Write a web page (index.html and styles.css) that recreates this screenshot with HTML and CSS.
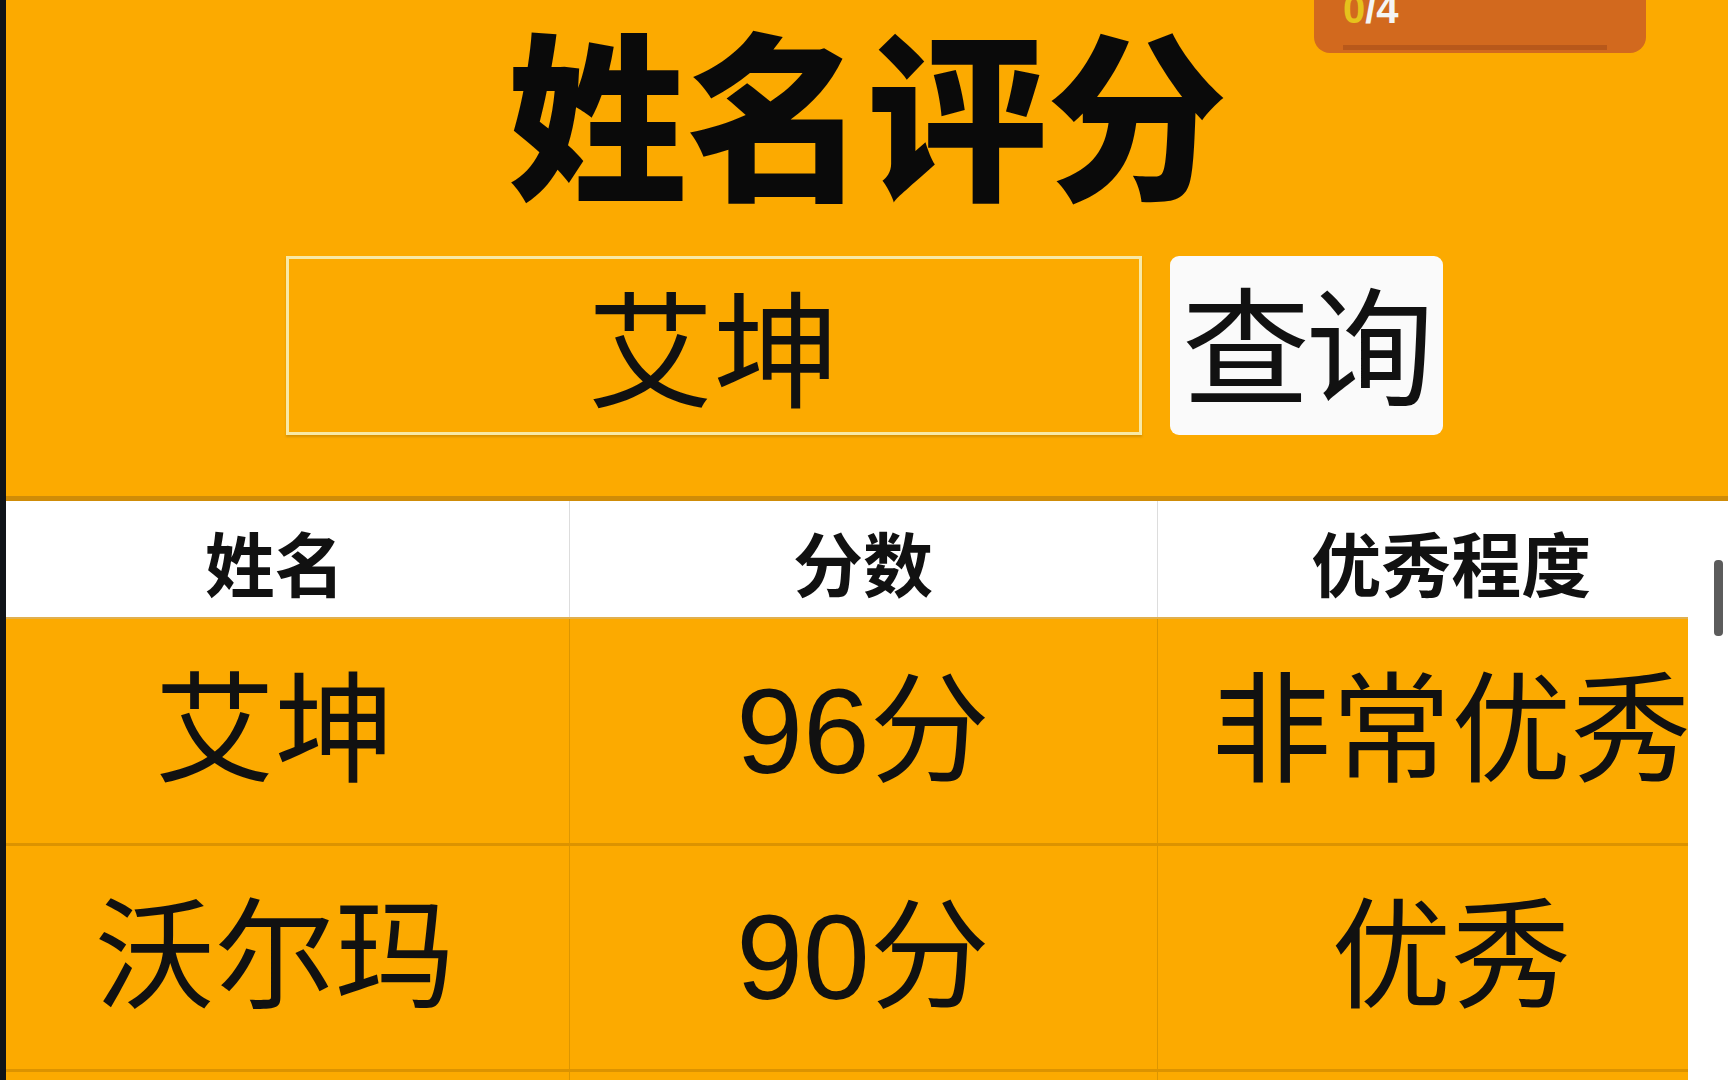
FILE: index.html
```html
<!DOCTYPE html>
<html lang="zh-CN">
<head>
<meta charset="utf-8">
<title>姓名评分</title>
<link rel="stylesheet" href="styles.css">
</head>
<body>
<div class="page">
  <header class="hero">
    <h1 class="title">姓名评分</h1>
    <div class="search">
      <div class="input">艾坤</div>
      <button class="btn">查询</button>
    </div>
  </header>
  <div class="table-wrap">
    <table class="score">
      <thead>
        <tr><th>姓名</th><th>分数</th><th>优秀程度</th></tr>
      </thead>
      <tbody>
        <tr><td>艾坤</td><td><span class="num">96</span>分</td><td>非常优秀</td></tr>
        <tr><td>沃尔玛</td><td><span class="num">90</span>分</td><td>优秀</td></tr>
        <tr><td>&nbsp;</td><td>&nbsp;</td><td>&nbsp;</td></tr>
      </tbody>
    </table>
  </div>
  <div class="scroll-thumb"></div>
  <div class="badge"><span class="done">0</span>/4<span class="badge-bar"></span></div>
</div>
</body>
</html>
```
FILE: styles.css
```css
html, body {
  margin: 0;
  padding: 0;
  height: 100%;
  overflow: hidden;
}
body {
  font-family: "Noto Sans CJK SC", "Liberation Sans", sans-serif;
  background: #ffffff;
  color: #111;
}
.page {
  position: relative;
  min-height: 100vh;
  border-left: 6px solid #101418;
  background: #ffffff;
}
.hero {
  background: #fcaa00;
  padding-top: 18px;
  padding-bottom: 61px;
  border-bottom: 5px solid #cf8c08;
}
.title {
  margin: 0;
  text-align: center;
  font-size: 180px;
  line-height: 180px;
  font-weight: 900;
  color: #0a0a0a;
}
.search {
  margin-top: 58px;
  display: flex;
  justify-content: center;
  gap: 28px;
  padding-right: 6px;
}
.input {
  box-sizing: border-box;
  width: 856px;
  height: 179px;
  border: 3px solid #f8e9a6;
  box-shadow: 0 2px 2px rgba(150, 100, 0, 0.35);
  background: #fcaa00;
  display: flex;
  align-items: center;
  justify-content: center;
  font-size: 126px;
  font-weight: 400;
  color: #111;
  line-height: 1;
  padding-bottom: 6px;
}
.btn {
  box-sizing: border-box;
  width: 273px;
  height: 179px;
  border: none;
  border-radius: 9px;
  background: #fafafa;
  font-family: "Noto Sans CJK SC", sans-serif;
  font-size: 128px;
  line-height: 1;
  color: #111;
  padding: 0 0 10px 0;
  letter-spacing: -4px;
}
.table-wrap {
  width: 1682px;
  overflow: hidden;
}
.score {
  margin-left: -25px;
  width: 1764px;
  table-layout: fixed;
  border-collapse: collapse;
}
.score th {
  height: 110px;
  background: #ffffff;
  font-size: 70px;
  font-weight: 700;
  color: #111;
  text-align: center;
  padding: 6px 0 0 0;
  border-left: 1px solid #dddddd;
  line-height: 1;
}
.score th:first-child { border-left: none; }
.score td {
  height: 226px;
  box-sizing: border-box;
  background: #fcaa00;
  font-family: "Liberation Sans", "Noto Sans CJK SC", sans-serif;
  font-size: 120px;
  font-weight: 400;
  color: #111;
  text-align: center;
  white-space: nowrap;
  padding: 0;
  border-top: 3px solid #dc9300;
  border-left: 1px solid #dc9600;
  line-height: 1;
}
.score td:first-child { border-left: none; }
.score tbody tr:first-child td { border-top: 2px solid #e0b050; }
.num {
  font-family: "Liberation Sans", sans-serif;
}
.scroll-thumb {
  position: absolute;
  top: 560px;
  right: 5px;
  width: 9px;
  height: 76px;
  border-radius: 4px;
  background: #5c5c5c;
}
.badge {
  position: absolute;
  top: -22px;
  right: 82px;
  width: 332px;
  height: 75px;
  box-sizing: border-box;
  padding-left: 29px;
  border-radius: 0 0 16px 16px;
  background: #d2691e;
  color: #f4f4f4;
  font-family: "Liberation Sans", sans-serif;
  font-weight: 700;
  font-size: 40px;
  line-height: 62px;
}
.done { color: #e6c21c; }
.badge-bar {
  position: absolute;
  left: 29px;
  right: 39px;
  bottom: 3px;
  height: 5px;
  background: #b8581a;
}
```
